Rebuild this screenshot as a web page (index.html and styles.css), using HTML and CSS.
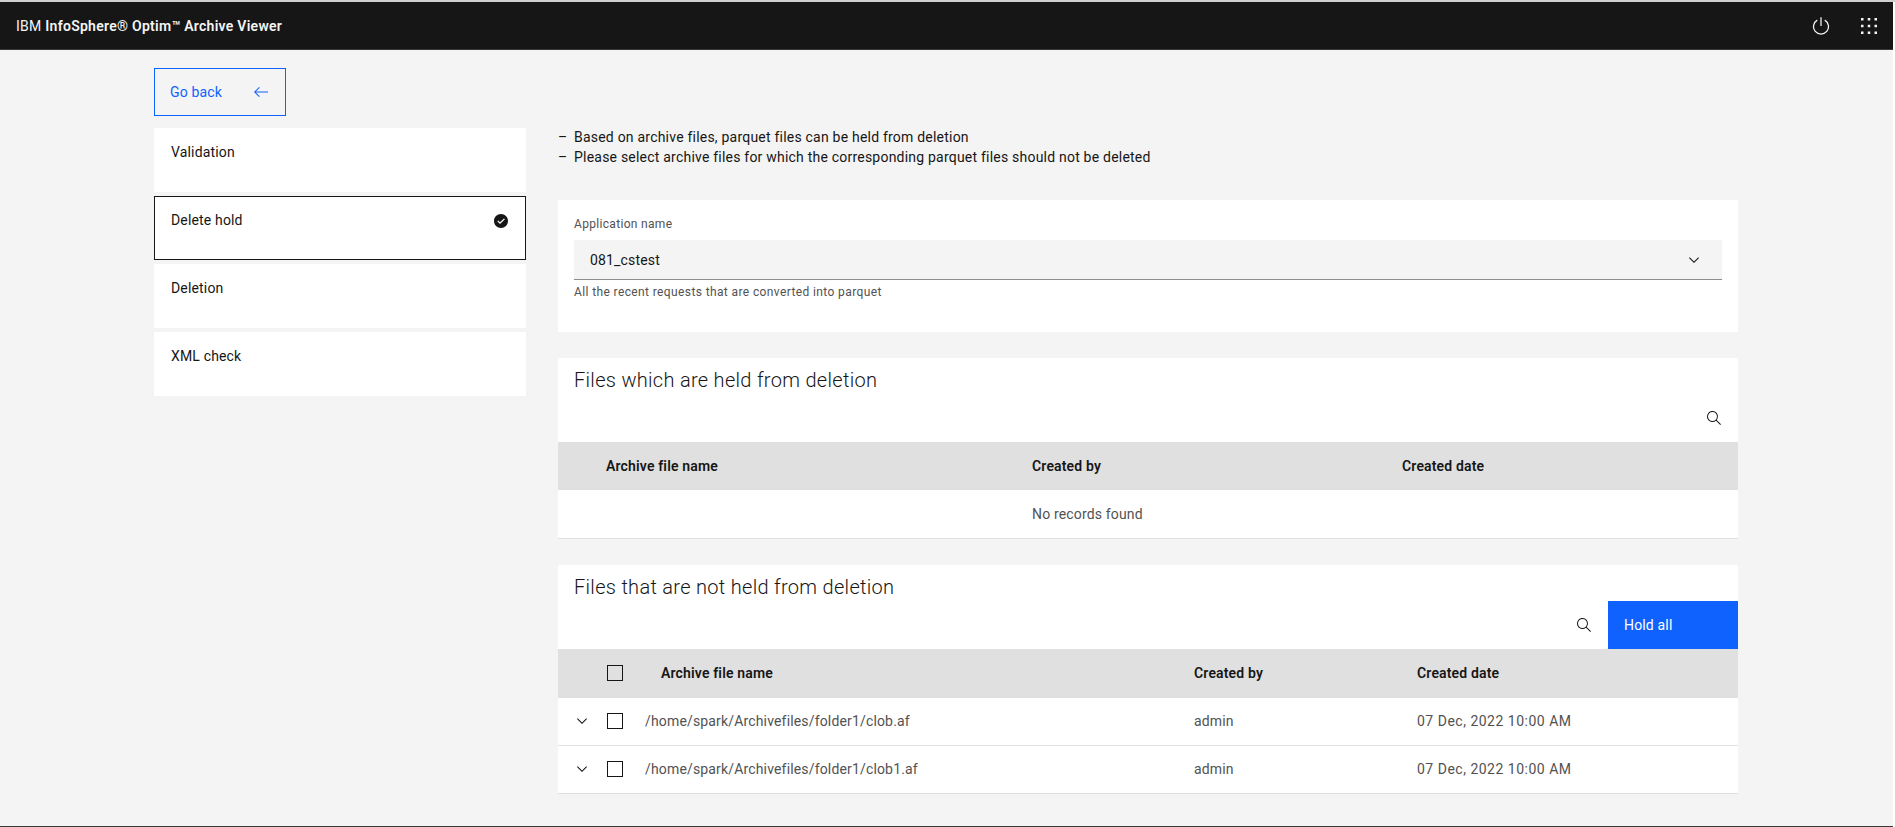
FILE: index.html
```html
<!DOCTYPE html>
<html lang="en">

<head>
    <meta charset="UTF-8">
    <meta name="viewport" content="width=device-width, initial-scale=1.0">
    <title>IBM InfoSphere Optim Archive Viewer</title>
    <link rel="stylesheet" href="styles.css">
</head>

<body>
    <div class="app">
        <header class="topbar">
            <div class="topbar-name"><span class="topbar-prefix">IBM</span> InfoSphere® Optim™ Archive Viewer</div>
            <div class="topbar-actions">
                <div class="topbar-btn">
                    <svg width="20" height="20" viewBox="0 0 32 32" fill="#f4f4f4">
                        <path d="M22.5 5.74l-1 1.73a11 11 0 1 1-11 0l-1-1.73a13 13 0 1 0 13 0z" />
                        <path d="M15 2h2v14h-2z" />
                    </svg>
                </div>
                <div class="topbar-btn">
                    <svg width="20" height="20" viewBox="0 0 20 20" fill="#f4f4f4">
                        <rect x="2" y="2" width="2.5" height="2.5" />
                        <rect x="8.75" y="2" width="2.5" height="2.5" />
                        <rect x="15.5" y="2" width="2.5" height="2.5" />
                        <rect x="2" y="8.75" width="2.5" height="2.5" />
                        <rect x="8.75" y="8.75" width="2.5" height="2.5" />
                        <rect x="15.5" y="8.75" width="2.5" height="2.5" />
                        <rect x="2" y="15.5" width="2.5" height="2.5" />
                        <rect x="8.75" y="15.5" width="2.5" height="2.5" />
                        <rect x="15.5" y="15.5" width="2.5" height="2.5" />
                    </svg>
                </div>
            </div>
        </header>

        <main class="main">
            <button class="back-btn">
                <span>Go back</span>
                <svg width="16" height="16" viewBox="0 0 16 16" fill="#0f62fe">
                    <path d="M6 13L6.7 12.3 2.9 8.5 15 8.5 15 7.5 2.9 7.5 6.7 3.7 6 3 1 8z" />
                </svg>
            </button>

            <div class="columns">
                <ul class="steps">
                    <li class="step">Validation</li>
                    <li class="step active">
                        <span>Delete hold</span>
                        <svg class="step-check" width="16" height="16" viewBox="0 0 16 16" fill="#161616">
                            <path fill-rule="evenodd" d="M8,1C4.1,1,1,4.1,1,8c0,3.9,3.1,7,7,7s7-3.1,7-7C15,4.1,11.9,1,8,1z M7,11L4.3,8.3l0.9-0.8L7,9.3l4-3.9l0.9,0.8L7,11z" />
                        </svg>
                    </li>
                    <li class="step">Deletion</li>
                    <li class="step">XML check</li>
                </ul>

                <div class="panel">
                    <ul class="notes">
                        <li>Based on archive files, parquet files can be held from deletion</li>
                        <li>Please select archive files for which the corresponding parquet files should not be deleted</li>
                    </ul>

                    <section class="card select-card">
                        <div class="field-label">Application name</div>
                        <div class="select">
                            <span>081_cstest</span>
                            <svg width="16" height="16" viewBox="0 0 16 16" fill="#161616">
                                <path d="M8 11L3 6 3.7 5.3 8 9.6 12.3 5.3 13 6z" />
                            </svg>
                        </div>
                        <div class="field-help">All the recent requests that are converted into parquet</div>
                    </section>

                    <section class="card">
                        <h2 class="card-title">Files which are held from deletion</h2>
                        <div class="toolbar">
                            <svg width="16" height="16" viewBox="0 0 16 16" fill="#161616">
                                <path d="M15,14.3L10.7,10c1.9-2.3,1.6-5.8-0.7-7.7S4.2,0.7,2.3,3S0.7,8.8,3,10.7c2,1.7,5,1.7,7,0l4.3,4.3L15,14.3z M2,6.5C2,4,4,2,6.5,2S11,4,11,6.5S9,11,6.5,11S2,9,2,6.5z" />
                            </svg>
                        </div>
                        <div class="held-row held-head">
                            <div>Archive file name</div>
                            <div>Created by</div>
                            <div>Created date</div>
                        </div>
                        <div class="held-row held-empty">
                            <div></div>
                            <div>No records found</div>
                            <div></div>
                        </div>
                    </section>

                    <section class="card">
                        <h2 class="card-title">Files that are not held from deletion</h2>
                        <div class="toolbar toolbar-action">
                            <svg width="16" height="16" viewBox="0 0 16 16" fill="#161616">
                                <path d="M15,14.3L10.7,10c1.9-2.3,1.6-5.8-0.7-7.7S4.2,0.7,2.3,3S0.7,8.8,3,10.7c2,1.7,5,1.7,7,0l4.3,4.3L15,14.3z M2,6.5C2,4,4,2,6.5,2S11,4,11,6.5S9,11,6.5,11S2,9,2,6.5z" />
                            </svg>
                            <button class="hold-btn">Hold all</button>
                        </div>
                        <div class="file-row file-head">
                            <div></div>
                            <div class="check"></div>
                            <div class="file-head-name">Archive file name</div>
                            <div>Created by</div>
                            <div>Created date</div>
                        </div>
                        <div class="file-row">
                            <svg class="expand" width="16" height="16" viewBox="0 0 16 16" fill="#161616">
                                <path d="M8 11L3 6 3.7 5.3 8 9.6 12.3 5.3 13 6z" />
                            </svg>
                            <div class="check"></div>
                            <div>/home/spark/Archivefiles/folder1/clob.af</div>
                            <div>admin</div>
                            <div class="file-date">07 Dec, 2022 10:00 AM</div>
                        </div>
                        <div class="file-row">
                            <svg class="expand" width="16" height="16" viewBox="0 0 16 16" fill="#161616">
                                <path d="M8 11L3 6 3.7 5.3 8 9.6 12.3 5.3 13 6z" />
                            </svg>
                            <div class="check"></div>
                            <div>/home/spark/Archivefiles/folder1/clob1.af</div>
                            <div>admin</div>
                            <div class="file-date">07 Dec, 2022 10:00 AM</div>
                        </div>
                    </section>
                </div>
            </div>
        </main>
    </div>
</body>

</html>
```
FILE: styles.css
```css
html,
body {
    margin: 0;
    padding: 0;
    background-color: #fff;
}

body {
    font-family: "Roboto", "Liberation Sans", sans-serif;
    font-size: 14px;
    color: #161616;
    overflow: hidden;
    border-top: 2px solid #d0d0d0;
}

ul {
    margin: 0;
    padding: 0;
    list-style: none;
}

.app {
    box-sizing: border-box;
    width: 1893px;
    height: 825px;
    display: flex;
    flex-direction: column;
    background-color: #f4f4f4;
    border-bottom: 1px solid #393939;
}

.topbar {
    flex: 0 0 48px;
    box-sizing: border-box;
    display: flex;
    align-items: center;
    justify-content: space-between;
    padding-left: 16px;
    background-color: #161616;
    border-bottom: 1px solid #393939;
    color: #f4f4f4;
}

.topbar-name {
    font-weight: 600;
    letter-spacing: 0.27px;
}

.topbar-prefix {
    font-weight: 400;
}

.topbar-actions {
    display: flex;
}

.topbar-btn {
    width: 48px;
    height: 47px;
    display: flex;
    align-items: center;
    justify-content: center;
}

.main {
    padding: 18px 155px 0 154px;
}

.back-btn {
    box-sizing: border-box;
    display: flex;
    align-items: center;
    justify-content: space-between;
    width: 132px;
    height: 48px;
    padding: 0 16px 0 15px;
    margin-bottom: 12px;
    background: none;
    border: 1px solid #0f62fe;
    color: #0f62fe;
    font: inherit;
    letter-spacing: 0.16px;
}

.columns {
    display: flex;
    gap: 32px;
    align-items: flex-start;
}

.steps {
    flex: 0 0 372px;
    display: flex;
    flex-direction: column;
    gap: 4px;
}

.step {
    box-sizing: border-box;
    height: 64px;
    padding: 16px 17px;
    display: flex;
    justify-content: space-between;
    align-items: flex-start;
    background-color: #fff;
    line-height: 16px;
    letter-spacing: 0.16px;
}

.step.active {
    padding: 15px 16px;
    border: 1px solid #161616;
}

.step-check {
    margin-top: 1px;
}

.panel {
    flex: 0 0 1180px;
}

.notes {
    margin-bottom: 34px;
}

.notes li {
    position: relative;
    padding-left: 16px;
    line-height: 18px;
    margin-bottom: 2px;
    letter-spacing: 0.215px;
}

.notes li::before {
    content: "–";
    position: absolute;
    left: 0;
}

.card {
    background-color: #fff;
    margin-bottom: 26px;
}

.select-card {
    padding: 16px 16px 32px;
}

.field-label,
.field-help {
    font-size: 12px;
    line-height: 16px;
    color: #525252;
    letter-spacing: 0.32px;
}

.field-help {
    margin-top: 4px;
    letter-spacing: 0.385px;
}

.select {
    box-sizing: border-box;
    height: 40px;
    margin-top: 8px;
    padding: 0 20px 0 16px;
    display: flex;
    align-items: center;
    justify-content: space-between;
    background-color: #f4f4f4;
    border-bottom: 1px solid #8d8d8d;
    letter-spacing: 0.16px;
}

.card-title {
    margin: 0;
    padding: 8px 16px 0;
    font-size: 20px;
    font-weight: 300;
    line-height: 28px;
    letter-spacing: 0.3px;
}

.toolbar {
    height: 48px;
    padding-right: 16px;
    display: flex;
    align-items: center;
    justify-content: flex-end;
}

.toolbar-action {
    padding-right: 0;
    gap: 16px;
}

.hold-btn {
    box-sizing: border-box;
    width: 130px;
    height: 48px;
    padding: 0 16px;
    text-align: left;
    background-color: #0f62fe;
    border: 0;
    color: #fff;
    font: inherit;
    letter-spacing: 0.16px;
}

.held-row {
    box-sizing: border-box;
    height: 48px;
    padding-left: 48px;
    display: grid;
    grid-template-columns: 426px 370px 1fr;
    align-items: center;
    letter-spacing: 0.16px;
}

.held-head,
.file-head {
    background-color: #e0e0e0;
    font-weight: 600;
}

.held-empty {
    height: 49px;
    color: #525252;
    border-bottom: 1px solid #e0e0e0;
}

.file-row {
    box-sizing: border-box;
    height: 48px;
    padding-bottom: 1px;
    display: grid;
    grid-template-columns: 49px 38px 549px 223px 1fr;
    align-items: center;
    color: #525252;
    border-bottom: 1px solid #e0e0e0;
    letter-spacing: 0.16px;
}

.file-head {
    height: 49px;
    color: #161616;
    border-bottom: 0;
}

.file-head-name {
    padding-left: 16px;
}

.file-date {
    letter-spacing: 0.5px;
}

.expand {
    margin-left: 16px;
}

.check {
    box-sizing: border-box;
    width: 16px;
    height: 16px;
    border: 1px solid #161616;
}
```
